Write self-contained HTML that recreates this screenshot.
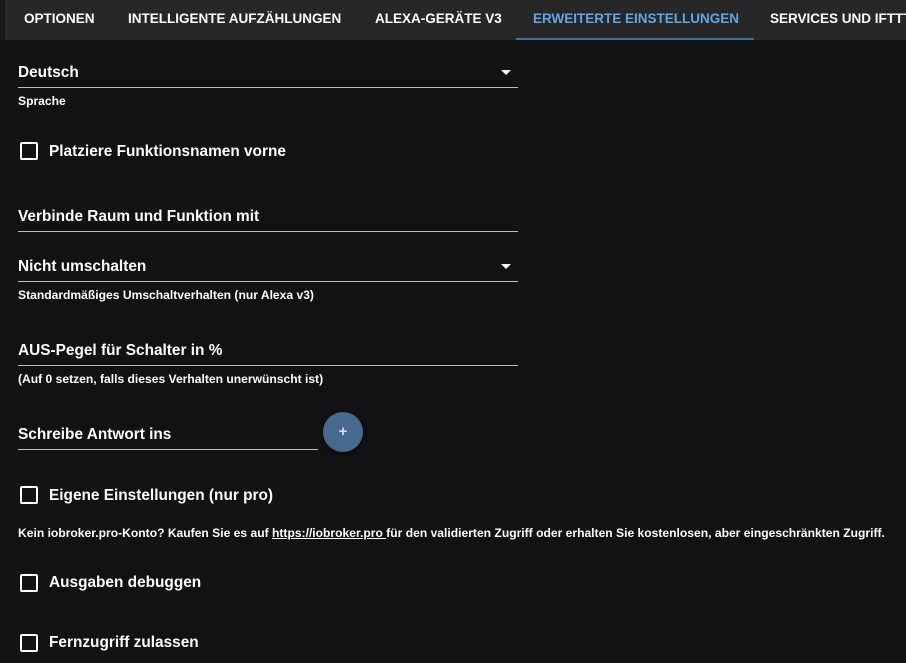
<!DOCTYPE html>
<html><head><meta charset="utf-8"><style>
body{margin:0;width:906px;height:663px;background:#121212;font-family:"Liberation Sans",sans-serif;color:#fff;position:relative;overflow:hidden}
.a{position:absolute;white-space:nowrap}
.tabs{position:absolute;left:5px;top:0;width:901px;height:40px;background:#272727}
.tab{position:absolute;top:11px;font-size:13.5px;font-weight:bold;letter-spacing:0}
.f{font-size:15.4px;font-weight:bold;margin-top:1px}
.h{font-size:12.1px;font-weight:bold}
.line{position:absolute;height:1px;background:#bdbdbd}
.cb{position:absolute;left:20px;width:14px;height:14px;border:2px solid #fff;border-radius:2px}
.arr{position:absolute;width:0;height:0;border-left:5px solid transparent;border-right:5px solid transparent;border-top:5px solid #fff}
</style></head><body>
<div class="tabs"></div>
<div class="a" style="left:0;top:0;width:5px;height:40px;background:#1a1a1a"></div>
<div class="a tab" style="left:24px">OPTIONEN</div>
<div class="a tab" style="left:128px">INTELLIGENTE AUFZÄHLUNGEN</div>
<div class="a tab" style="left:375px">ALEXA-GERÄTE V3</div>
<div class="a tab" style="left:533px;color:#5ea6e6">ERWEITERTE EINSTELLUNGEN</div>
<div class="a tab" style="left:770px">SERVICES UND IFTTT</div>
<div class="a" style="left:516px;top:38px;width:238px;height:2px;background:#3f6fa3"></div>

<div class="a f" style="left:18px;top:63px">Deutsch</div>
<div class="arr" style="left:501px;top:70px"></div>
<div class="line" style="left:18px;top:87px;width:500px"></div>
<div class="a h" style="left:18px;top:94px">Sprache</div>

<div class="cb" style="top:142px"></div>
<div class="a f" style="left:49px;top:142px">Platziere Funktionsnamen vorne</div>

<div class="a f" style="left:18px;top:207px">Verbinde Raum und Funktion mit</div>
<div class="line" style="left:18px;top:231px;width:500px"></div>

<div class="a f" style="left:18px;top:257px">Nicht umschalten</div>
<div class="arr" style="left:501px;top:264px"></div>
<div class="line" style="left:18px;top:281px;width:500px"></div>
<div class="a h" style="left:18px;top:288px">Standardmäßiges Umschaltverhalten (nur Alexa v3)</div>

<div class="a f" style="left:18px;top:341px">AUS-Pegel für Schalter in %</div>
<div class="line" style="left:18px;top:365px;width:500px"></div>
<div class="a h" style="left:18px;top:372px">(Auf 0 setzen, falls dieses Verhalten unerwünscht ist)</div>

<div class="a f" style="left:18px;top:425px">Schreibe Antwort ins</div>
<div class="line" style="left:18px;top:449px;width:300px"></div>
<div class="a" style="left:323px;top:412px;width:40px;height:40px;border-radius:50%;background:#46698f;box-shadow:0 2px 4px rgba(0,0,0,.5);text-align:center;line-height:40px;font-size:15px;font-weight:bold;color:#ddd">+</div>

<div class="cb" style="top:486px"></div>
<div class="a f" style="left:49px;top:486px">Eigene Einstellungen (nur pro)</div>
<div class="a h" style="left:18px;top:526px">Kein iobroker.pro-Konto? Kaufen Sie es auf <span style="text-decoration:underline">https://iobroker.pro </span>für den validierten Zugriff oder erhalten Sie kostenlosen, aber eingeschränkten Zugriff.</div>

<div class="cb" style="top:574px"></div>
<div class="a f" style="left:49px;top:573px">Ausgaben debuggen</div>
<div class="cb" style="top:634px"></div>
<div class="a f" style="left:49px;top:633px">Fernzugriff zulassen</div>
</body></html>
